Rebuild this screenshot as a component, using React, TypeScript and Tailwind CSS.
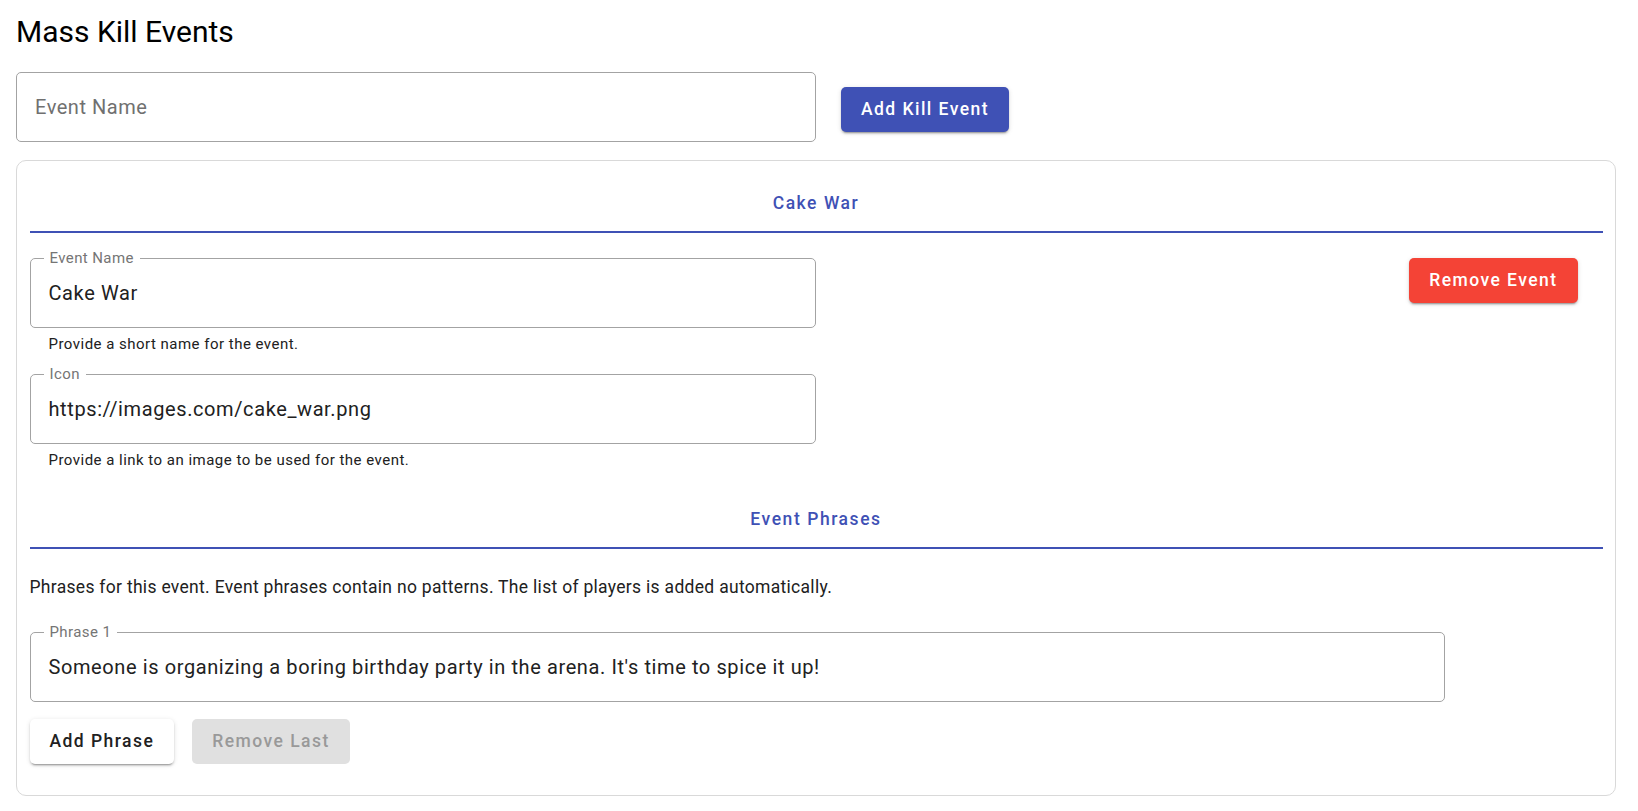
import React from "react";

const SHADOW =
  "shadow-[0px_3px_1px_-2px_rgba(0,0,0,0.2),0px_2px_2px_0px_rgba(0,0,0,0.14),0px_1px_5px_0px_rgba(0,0,0,0.12)]";

function Field({ label, value, helper, className = "" }: { label: string; value: string; helper?: string; className?: string }) {
  return (
    <div className={className}>
      <div className="relative h-[70px] border border-[#a3a3a3] rounded-[5px] flex items-center pl-[18px] text-[20px] tracking-[0.6px] text-[#212121]">
        <span className="absolute left-[13px] top-[-8px] px-[6px] bg-white text-[15px] leading-[15px] tracking-[0.4px] text-[#757575]">{label}</span>
        <span>{value}</span>
      </div>
      {helper && <div className="mt-1 pl-[19px] text-[15px] leading-[25px] tracking-[0.48px] text-[#212121]">{helper}</div>}
    </div>
  );
}

function Tab({ label }: { label: string }) {
  return (
    <div className="h-[60px] flex flex-col">
      <div className="flex-1 flex items-center justify-center pt-[2px] text-[17.5px] font-medium tracking-[1.55px] text-[#3f51b5]">{label}</div>
      <div className="h-[2.5px] bg-[#3f51b5]" />
    </div>
  );
}

export default function App() {
  return (
    <div className="min-h-screen bg-white font-['Roboto',sans-serif] pl-4 pr-[22px] pt-3">
      <h1 className="text-[30px] leading-[40px] font-normal text-black">Mass Kill Events</h1>
      <div className="flex items-start mt-5">
        <div className="w-[800px] h-[70px] border border-[#a3a3a3] rounded-[5px] flex items-center pl-[18px] text-[20px] tracking-[0.52px] text-[#707070]">
          Event Name
        </div>
        <button className={`ml-[25px] mt-[15px] h-[45px] px-5 rounded-[5px] bg-[#3f51b5] text-white text-[17.5px] font-medium tracking-[1.45px] ${SHADOW}`}>
          Add Kill Event
        </button>
      </div>
      <div className="mt-[18px] border border-[#d9d9d9] rounded-[10px] px-[12.5px] pt-3 pb-[31px]">
        <Tab label="Cake War" />
        <div className="flex mt-[25px]">
          <div className="w-1/2">
            <Field label="Event Name" value="Cake War" helper="Provide a short name for the event." />
            <Field className="mt-[17px]" label="Icon" value="https://images.com/cake_war.png" helper="Provide a link to an image to be used for the event." />
          </div>
          <div className="w-1/2 flex justify-end items-start pr-[25px]">
            <button className={`h-[45px] px-5 rounded-[5px] bg-[#f44336] text-white text-[17.5px] font-medium tracking-[1.45px] ${SHADOW}`}>
              Remove Event
            </button>
          </div>
        </div>
        <div className="mt-4">
          <Tab label="Event Phrases" />
        </div>
        <p className="mt-[26px] text-[17.5px] leading-[25px] tracking-[0.3px] text-[#212121]">
          Phrases for this event. Event phrases contain no patterns. The list of players is added automatically.
        </p>
        <Field className="mt-8 w-[90%]" label="Phrase 1" value="Someone is organizing a boring birthday party in the arena. It's time to spice it up!" />
        <div className="flex mt-[17px] gap-[18px]">
          <button className={`h-[45px] px-5 rounded-[5px] bg-white text-[#212121] text-[17.5px] font-medium tracking-[1.45px] ${SHADOW}`}>
            Add Phrase
          </button>
          <button disabled className="h-[45px] px-5 rounded-[5px] bg-[#e0e0e0] text-[#999999] text-[17.5px] font-medium tracking-[1.45px]">
            Remove Last
          </button>
        </div>
      </div>
    </div>
  );
}
